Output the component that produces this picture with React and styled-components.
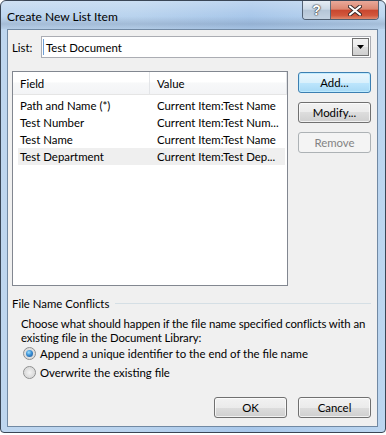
import React from 'react';
import styled, { createGlobalStyle, css } from 'styled-components';

const GlobalStyle = createGlobalStyle`
  html, body {
    margin: 0;
    padding: 0;
    background: #ffffff;
  }
  body {
    font-family: Lato, "Liberation Sans", sans-serif;
    font-size: 11.4px;
    color: #000;
  }
`;

const Window = styled.div`
  box-sizing: border-box;
  width: 386px;
  height: 433px;
  border: 1px solid #3a4656;
  border-radius: 6px 6px 4px 4px;
  padding: 0 7px 5px 6px;
  display: flex;
  flex-direction: column;
  background: linear-gradient(to right, #bed6ef 0%, #b9d3ee 35%, #a8c7ea 65%, #bcd6f0 100%);
  overflow: hidden;
`;

const TitleBar = styled.div`
  height: 28px;
  margin: 0 -7px 0 -6px;
  padding: 0 6px 0 6px;
  display: flex;
  align-items: flex-start;
  background: linear-gradient(to bottom,
    rgba(255, 255, 255, 0.25) 0%,
    rgba(255, 255, 255, 0) 55%,
    rgba(80, 100, 130, 0.22) 82%,
    rgba(140, 160, 185, 0.15) 100%);
`;

const Title = styled.div`
  padding-top: 8px;
  font-size: 12px;
  color: #000;
  flex: 1;
`;

const CaptionGroup = styled.div`
  display: flex;
  border: 1px solid rgba(50, 60, 75, 0.75);
  border-top: none;
  border-radius: 0 0 4px 4px;
  overflow: hidden;
`;

const CaptionButton = styled.div`
  height: 18px;
  display: flex;
  align-items: center;
  justify-content: center;
  ${(p) =>
    p.$close
      ? css`
          width: 47px;
          background: linear-gradient(to bottom, #e9a99a 0%, #dc8872 45%, #c9472f 52%, #d2573c 80%, #e08a6e 100%);
        `
      : css`
          width: 27px;
          border-right: 1px solid rgba(50, 60, 75, 0.7);
          background: linear-gradient(to bottom, #e6edf4 0%, #ccd9e6 45%, #b5c6d7 52%, #c4d3e2 100%);
        `}
`;

const HelpGlyph = styled.span`
  font-family: "Liberation Sans", sans-serif;
  font-weight: bold;
  font-size: 14px;
  color: #fff;
  text-shadow: 0 0 1px #333, 0 0 1px #333, 0 0 2px #555;
  line-height: 1;
`;

const Client = styled.div`
  flex: 1;
  display: flex;
  flex-direction: column;
  background: #f0f0f0;
  border: 1px solid #7189a3;
`;

const ListRow = styled.div`
  margin-top: 6px;
  height: 22px;
  padding: 0 6px 0 4px;
  display: flex;
  align-items: center;
`;

const Label = styled.span`
  width: 29px;
`;

const Combo = styled.div`
  flex: 1;
  box-sizing: border-box;
  height: 22px;
  border: 1px solid #abadb3;
  background: #fff;
  display: flex;
  align-items: center;
  padding: 0 1px 0 1px;
`;

const Caret = styled.span`
  width: 1px;
  height: 16px;
  background: #6e9fd6;
  margin-right: 2px;
`;

const ComboText = styled.span`
  flex: 1;
`;

const DropButton = styled.div`
  box-sizing: border-box;
  width: 17px;
  height: 18px;
  border: 1px solid #707070;
  background: linear-gradient(to bottom, #f2f2f2 0%, #ebebeb 50%, #dddddd 50%, #cfcfcf 100%);
  display: flex;
  align-items: center;
  justify-content: center;
`;

const Body = styled.div`
  margin-top: 13px;
  padding-left: 4px;
  display: flex;
  gap: 10px;
`;

const ListView = styled.div`
  box-sizing: border-box;
  width: 276px;
  height: 215px;
  border: 1px solid #828790;
  background: #fff;
`;

const Header = styled.div`
  height: 22px;
  display: flex;
  border-bottom: 1px solid #e5e5e5;
  background: linear-gradient(to bottom, #ffffff 0%, #ffffff 45%, #f7f8f9 50%, #f3f4f6 100%);
`;

const HeaderCell = styled.div`
  box-sizing: border-box;
  width: ${(p) => p.$w}px;
  padding-left: 7px;
  display: flex;
  align-items: center;
  border-right: 1px solid #e3e5e8;
`;

const Rows = styled.div`
  padding: 2px 2px 0 5px;
`;

const Row = styled.div`
  height: 17px;
  display: flex;
  align-items: center;
  background: ${(p) => (p.$selected ? '#efefef' : 'transparent')};
`;

const Cell = styled.div`
  box-sizing: border-box;
  width: ${(p) => p.$w}px;
  padding-left: 2px;
  white-space: nowrap;
  overflow: hidden;
`;

const ButtonColumn = styled.div`
  padding-top: 1px;
  display: flex;
  flex-direction: column;
  gap: 9px;
`;

const Button = styled.div`
  box-sizing: border-box;
  width: 73px;
  height: 21px;
  border-radius: 3px;
  display: flex;
  align-items: center;
  justify-content: center;
  border: 1px solid #707070;
  background: linear-gradient(to bottom, #f2f2f2 0%, #ebebeb 50%, #dddddd 50%, #cfcfcf 100%);
  box-shadow: inset 0 0 0 1px rgba(255, 255, 255, 0.7);
  ${(p) =>
    p.$default &&
    css`
      border-color: #3c7fb1;
      background: linear-gradient(to bottom, #eaf6fd 0%, #d9f0fc 50%, #bee6fd 50%, #a7d9f5 100%);
      box-shadow: inset 0 0 0 1px rgba(190, 235, 255, 0.9);
    `}
  ${(p) =>
    p.$disabled &&
    css`
      border-color: #adb2b5;
      background: #f4f4f4;
      color: #838383;
      box-shadow: none;
    `}
`;

const Group = styled.div`
  margin-top: 10px;
  padding: 0 6px 0 4px;
  height: 14px;
  display: flex;
  align-items: center;
`;

const GroupLine = styled.div`
  flex: 1;
  margin-left: 6px;
  border-top: 1px solid #d5dfe5;
`;

const Description = styled.div`
  margin-top: 7px;
  padding-left: 13px;
  line-height: 13.5px;
  letter-spacing: -0.1px;
  white-space: nowrap;
`;

const RadioRow = styled.div`
  height: 19px;
  padding-left: 15px;
  display: flex;
  align-items: center;
  gap: 4px;
`;

const RadioCircle = styled.span`
  box-sizing: border-box;
  width: 13px;
  height: 13px;
  border-radius: 50%;
  border: 1px solid #8e8f8f;
  background: radial-gradient(circle at 50% 50%, #f4f4f4 0%, #dcdcdc 60%, #eeeeee 100%);
  display: flex;
  align-items: center;
  justify-content: center;
  &::after {
    content: '';
    display: ${(p) => (p.$checked ? 'block' : 'none')};
    width: 7px;
    height: 7px;
    border-radius: 50%;
    background: radial-gradient(circle at 40% 35%, #9ee0ff 0%, #3a8fd4 45%, #1b4f8f 100%);
  }
`;

const Footer = styled.div`
  margin-top: auto;
  padding: 0 6px 8px 0;
  display: flex;
  justify-content: flex-end;
  gap: 11px;
`;

const rows = [
  ['Path and Name (*)', 'Current Item:Test Name'],
  ['Test Number', 'Current Item:Test Num...'],
  ['Test Name', 'Current Item:Test Name'],
  ['Test Department', 'Current Item:Test Dep...'],
];

export default function App() {
  return (
    <>
      <GlobalStyle />
      <Window>
        <TitleBar>
          <Title>Create New List Item</Title>
          <CaptionGroup>
            <CaptionButton>
              <HelpGlyph>?</HelpGlyph>
            </CaptionButton>
            <CaptionButton $close>
              <svg width="14" height="11" viewBox="0 0 14 11">
                <path d="M2 1.5 L12 9.5 M12 1.5 L2 9.5" stroke="#3a2a2a" strokeWidth="4" strokeLinecap="round" />
                <path d="M2 1.5 L12 9.5 M12 1.5 L2 9.5" stroke="#ffffff" strokeWidth="2.2" strokeLinecap="round" />
              </svg>
            </CaptionButton>
          </CaptionGroup>
        </TitleBar>
        <Client>
          <ListRow>
            <Label>List:</Label>
            <Combo>
              <Caret />
              <ComboText>Test Document</ComboText>
              <DropButton>
                <svg width="7" height="4" viewBox="0 0 7 4">
                  <path d="M0 0 H7 L3.5 4 Z" fill="#000" />
                </svg>
              </DropButton>
            </Combo>
          </ListRow>
          <Body>
            <ListView>
              <Header>
                <HeaderCell $w={137}>Field</HeaderCell>
                <HeaderCell $w={137}>Value</HeaderCell>
              </Header>
              <Rows>
                {rows.map(([field, value], i) => (
                  <Row key={field} $selected={i === 3}>
                    <Cell $w={137}>{field}</Cell>
                    <Cell $w={130}>{value}</Cell>
                  </Row>
                ))}
              </Rows>
            </ListView>
            <ButtonColumn>
              <Button $default>Add...</Button>
              <Button>Modify...</Button>
              <Button $disabled>Remove</Button>
            </ButtonColumn>
          </Body>
          <Group>
            <span>File Name Conflicts</span>
            <GroupLine />
          </Group>
          <Description>
            Choose what should happen if the file name specified conflicts with an
            <br />
            existing file in the Document Library:
          </Description>
          <RadioRow>
            <RadioCircle $checked />
            <span>Append a unique identifier to the end of the file name</span>
          </RadioRow>
          <RadioRow>
            <RadioCircle />
            <span>Overwrite the existing file</span>
          </RadioRow>
          <Footer>
            <Button>OK</Button>
            <Button>Cancel</Button>
          </Footer>
        </Client>
      </Window>
    </>
  );
}
